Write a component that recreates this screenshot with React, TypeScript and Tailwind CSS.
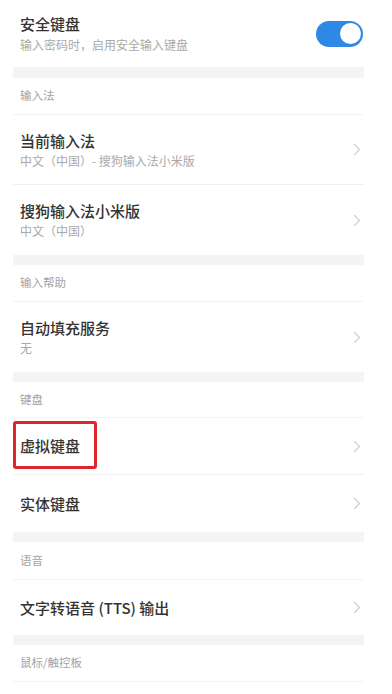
import React from "react";

const font = { fontFamily: '"Noto Sans CJK SC", "Noto Sans", sans-serif' };

function Chevron() {
  return (
    <svg width="8" height="13" viewBox="0 0 8 13" fill="none" className="shrink-0">
      <path d="M1.5 1.5 L6.5 6.5 L1.5 11.5" stroke="#cfcfcf" strokeWidth="1.2" strokeLinecap="round" strokeLinejoin="round" />
    </svg>
  );
}

function Band() {
  return <div className="h-[10px] bg-[#f4f4f4]" />;
}

function Header({ text, h = "h-[37px]" }: { text: string; h?: string }) {
  return (
    <div className={`${h} flex items-center pl-[7px] text-[11.5px] text-[#a3a3a3] border-b border-[#f3f3f3]`}>
      {text}
    </div>
  );
}

function Item({
  title,
  sub,
  h,
  last,
  children,
}: {
  title: string;
  sub?: string;
  h: string;
  last?: boolean;
  children?: React.ReactNode;
}) {
  return (
    <div className={`relative ${h} flex items-center pl-[7px] pr-[3px] ${last ? "" : "border-b border-[#f1f1f1]"}`}>
      <div className="flex-1 flex flex-col">
        <span className="text-[15px] leading-[20px] font-medium text-[#333333]">{title}</span>
        {sub && <span className="mt-[2px] text-[12px] leading-[16px] text-[#a9a9a9]">{sub}</span>}
      </div>
      <Chevron />
      {children}
    </div>
  );
}

export default function App() {
  return (
    <div className="w-full h-[694px] bg-white overflow-hidden" style={font}>
      <div className="ml-[13px] w-[351px]">
        {/* 安全键盘 */}
        <div className="h-[67px] flex items-center pl-[7px] pr-[1px]">
          <div className="flex-1 flex flex-col">
            <span className="text-[15px] leading-[20px] font-medium text-[#333333]">安全键盘</span>
            <span className="mt-[3px] text-[12px] leading-[16px] text-[#a9a9a9]">输入密码时，启用安全输入键盘</span>
          </div>
          <div className="w-[47px] h-[26px] rounded-full bg-[#2f87e6] flex items-center justify-end pr-[2px]">
            <div className="w-[21px] h-[21px] rounded-full bg-white" />
          </div>
        </div>
        <div className="h-[11px] bg-[#f4f4f4]" />

        <Header text="输入法" />
        <Item title="当前输入法" sub="中文（中国）- 搜狗输入法小米版" h="h-[70px]" />
        <Item title="搜狗输入法小米版" sub="中文（中国）" h="h-[70px]" last />
        <Band />

        <Header text="输入帮助" />
        <Item title="自动填充服务" sub="无" h="h-[70px]" last />
        <Band />

        <Header text="键盘" h="h-[36px]" />
        <Item title="虚拟键盘" h="h-[57px]">
          <div className="absolute left-0 top-[3px] w-[84px] h-[48px] border-[3px] border-[#e0242e] rounded-[3px]" />
        </Item>
        <Item title="实体键盘" h="h-[57px]" last />
        <Band />

        <Header text="语音" h="h-[38px]" />
        <Item title="文字转语音 (TTS) 输出" h="h-[55px]" last />
        <Band />

        <Header text="鼠标/触控板" />
      </div>
    </div>
  );
}
